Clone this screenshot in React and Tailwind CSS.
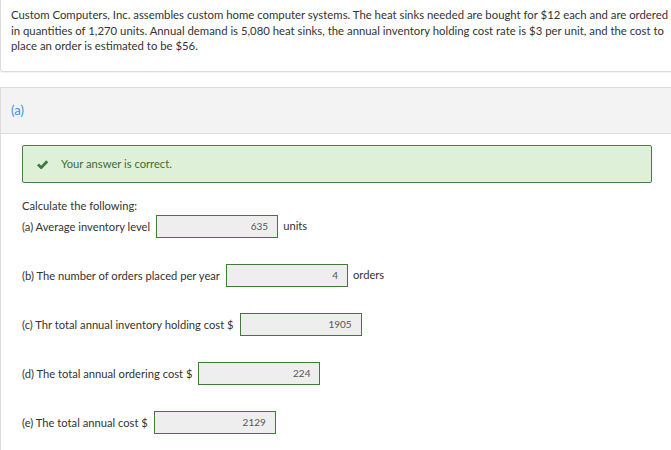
import React from "react";

const rows = [
  { label: "(a) Average inventory level", value: "635", unit: "units" },
  { label: "(b) The number of orders placed per year", value: "4", unit: "orders" },
  { label: "(c) Thr total annual inventory holding cost $", value: "1905" },
  { label: "(d) The total annual ordering cost $", value: "224" },
  { label: "(e) The total annual cost $", value: "2129" },
];

const Check = () => (
  <svg width="11" height="9" viewBox="0 0 11 9" className="shrink-0">
    <path d="M1 4.6 L4.2 7.6 L10.2 1.2" fill="none" stroke="#3b7a3a" strokeWidth="2.8" strokeLinejoin="miter" />
  </svg>
);

const App = () => {
  return (
    <div className="w-[671px] h-[450px] overflow-hidden bg-white text-[11.2px] text-[#333] font-['Lato','Liberation_Sans',sans-serif]">
      {/* problem statement */}
      <div className="w-[700px] h-[72px] border-l border-b border-[#dcdcdc] rounded-bl-[3px] pl-[10px] pt-[7px] leading-[15.5px] text-[11.35px] shadow-[0_1px_1px_rgba(0,0,0,0.05)]">
        <p className="w-[660px]">
          Custom Computers, Inc. assembles custom home computer systems. The heat sinks needed are bought for $12 each and are ordered in quantities of 1,270 units. Annual demand is 5,080 heat sinks, the annual inventory holding cost rate is $3 per unit, and the cost to place an order is estimated to be $56.
        </p>
      </div>

      {/* part (a) */}
      <div className="w-[700px] mt-[15px] border-l border-t border-[#dcdcdc] h-[400px]">
        <div className="h-[46px] bg-[#f3f3f3] border-b border-[#dcdcdc] flex items-center pl-[10px]">
          <span className="text-[13px] text-[#3d92e6]">(a)</span>
        </div>

        <div className="pl-[21px] pt-[11px]">
          <div className="w-[630px] h-[38px] bg-[#dff0d8] border border-[#4a7d43] rounded-[2px] flex items-center pl-[14px] gap-[13px]">
            <Check />
            <span className="text-[#3b6e35]">Your answer is correct.</span>
          </div>

          <div className="mt-[15px] leading-[16px]">Calculate the following:</div>

          <div className="flex flex-col gap-[26px] mt-[1px]">
            {rows.map((r) => (
              <div key={r.label} className="flex items-center h-[23px]">
                <span className="leading-[16px]">{r.label}</span>
                <div className="ml-[6px] w-[122px] h-[23px] bg-[#eeeeee] border border-[#3f7a38] flex items-center justify-end pr-[9px] text-[10px] text-[#555]">
                  {r.value}
                </div>
                {r.unit && <span className="ml-[5px]">{r.unit}</span>}
              </div>
            ))}
          </div>
        </div>
      </div>
    </div>
  );
};

export default App;
